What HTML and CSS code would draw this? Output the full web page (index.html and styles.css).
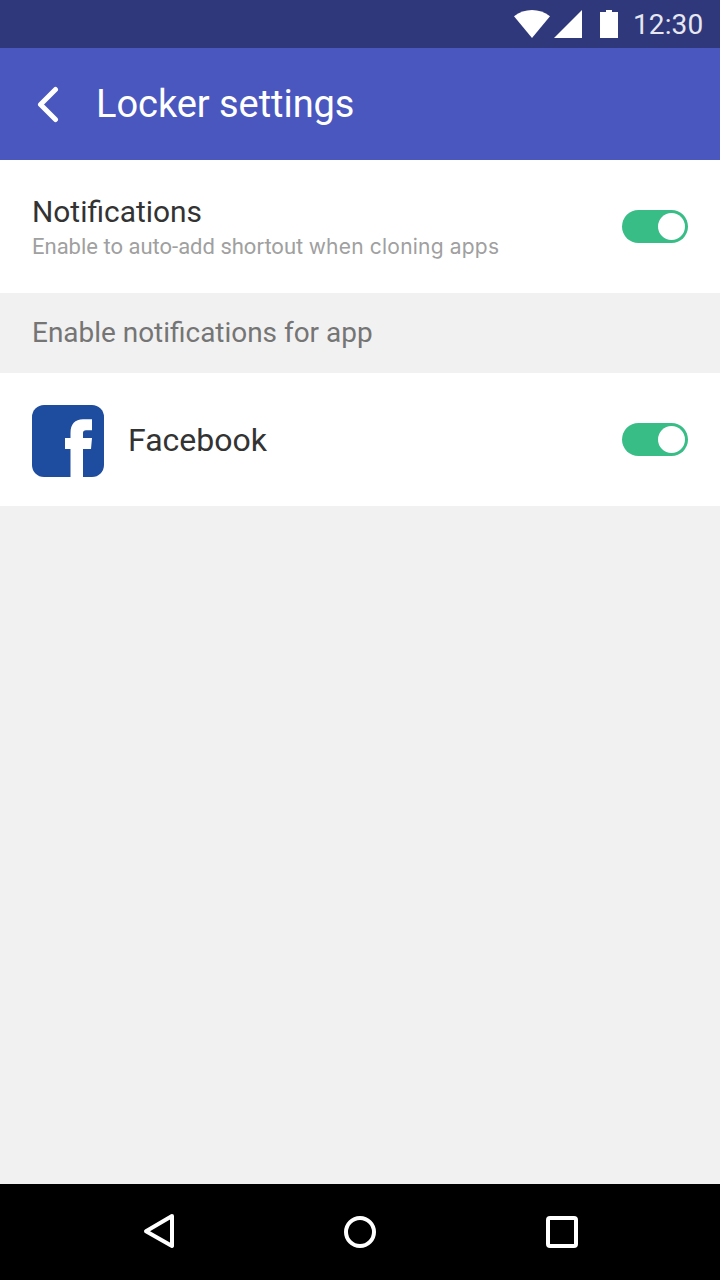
FILE: index.html
```html
<!DOCTYPE html>
<html lang="en">
<head>
<meta charset="utf-8">
<title>Locker settings</title>
<link rel="stylesheet" href="styles.css">
</head>
<body>
<div class="screen">
  <div class="status-bar">
    <svg class="status-icons" width="104" height="28" viewBox="0 0 104 28" fill="#fff">
      <path d="M0 6.2C10.500-2 25.500-2 36 6.200L18 28Z"/>
      <path d="M68 0V28H40Z"/>
      <path d="M92 0H98V2H104V28H86V2H92Z"/>
    </svg>
    <span class="clock">12:30</span>
  </div>
  <header class="app-bar">
    <svg class="back" width="24" height="38" viewBox="0 0 24 38" fill="none" stroke="#fff" stroke-width="5" stroke-linecap="round" stroke-linejoin="round"><path d="M19.500 4.500L4.500 19.500L19.500 34.500"/></svg>
    <h1 class="title">Locker settings</h1>
  </header>
  <main class="content">
    <section class="row">
      <div class="labels">
        <div class="label">Notifications</div>
        <div class="hint">Enable to auto-add shortout <span class="hint-end">when cloning apps</span></div>
      </div>
      <div class="switch"><div class="knob"></div></div>
    </section>
    <h2 class="group">Enable notifications for app</h2>
    <section class="row">
      <svg class="app-icon" width="72" height="72" viewBox="0 0 72 72">
        <rect width="72" height="72" rx="12" fill="#1e4c9f"/>
        <path fill="#fff" d="M38.500 72V44H33V33H38.500V28C38.500 19 43 14.300 51 14.300H60V25.300H54Q51 25.300 51 28V33H60L59 44H51V72Z"/>
      </svg>
      <div class="app-name">Facebook</div>
      <div class="switch"><div class="knob"></div></div>
    </section>
  </main>
  <nav class="nav-bar">
    <svg width="32" height="36" viewBox="0 0 32 36" fill="none" stroke="#fff" stroke-width="4" stroke-linejoin="round"><path d="M30 2L4 17.200L30 32Z"/></svg>
    <svg width="32" height="32" viewBox="0 0 32 32" fill="none" stroke="#fff" stroke-width="4"><circle cx="16" cy="16" r="14"/></svg>
    <svg width="32" height="32" viewBox="0 0 32 32" fill="none" stroke="#fff" stroke-width="4"><rect x="2" y="2" width="28" height="28" rx="2"/></svg>
  </nav>
</div>
</body>
</html>
```
FILE: styles.css
```css
* { box-sizing: border-box; }
body { margin: 0; font-family: Roboto, sans-serif; }
h1, h2 { margin: 0; font-weight: 400; }
svg { display: block; flex: none; }
.screen { display: flex; flex-direction: column; width: 720px; height: 1280px; background: #f1f1f1; }
.status-bar { display: flex; height: 48px; padding: 10px 0 0 514px; background: #2f387b; }
.clock { margin-left: 15px; font-size: 28px; font-weight: 450; line-height: 30px; letter-spacing: 0.1px; color: #e6e7ef; white-space: nowrap; }
.app-bar { display: flex; align-items: center; height: 112px; padding-left: 36px; background: #4a57bf; }
.title { margin-left: 36px; font-size: 38px; line-height: 44px; letter-spacing: -0.05px; color: #fff; white-space: nowrap; }
.content { flex: 1; }
.row { display: flex; align-items: center; height: 133px; padding: 0 32px; background: #fff; }
.labels { flex: 1; padding-top: 3px; }
.label { font-size: 29.9px; line-height: 36px; color: #333; }
.hint { font-size: 22px; line-height: 33px; color: #a0a0a0; white-space: nowrap; }
.hint-end { font-family: Inter, sans-serif; font-size: 21px; letter-spacing: 0.2px; }
.group { height: 80px; padding-left: 32px; font-size: 27.95px; line-height: 80px; color: #757575; }
.app-icon { margin-top: 2px; }
.app-name { flex: 1; margin-left: 24px; font-size: 32px; line-height: 40px; color: #333; }
.switch { display: flex; align-items: center; justify-content: flex-end; width: 66px; height: 33px; padding-right: 3px; border-radius: 17px; background: #38bd87; }
.knob { width: 27px; height: 27px; border-radius: 50%; background: #fff; }
.nav-bar { display: flex; align-items: center; justify-content: space-between; height: 96px; padding: 0 142px 0 142px; background: #000; }
```
